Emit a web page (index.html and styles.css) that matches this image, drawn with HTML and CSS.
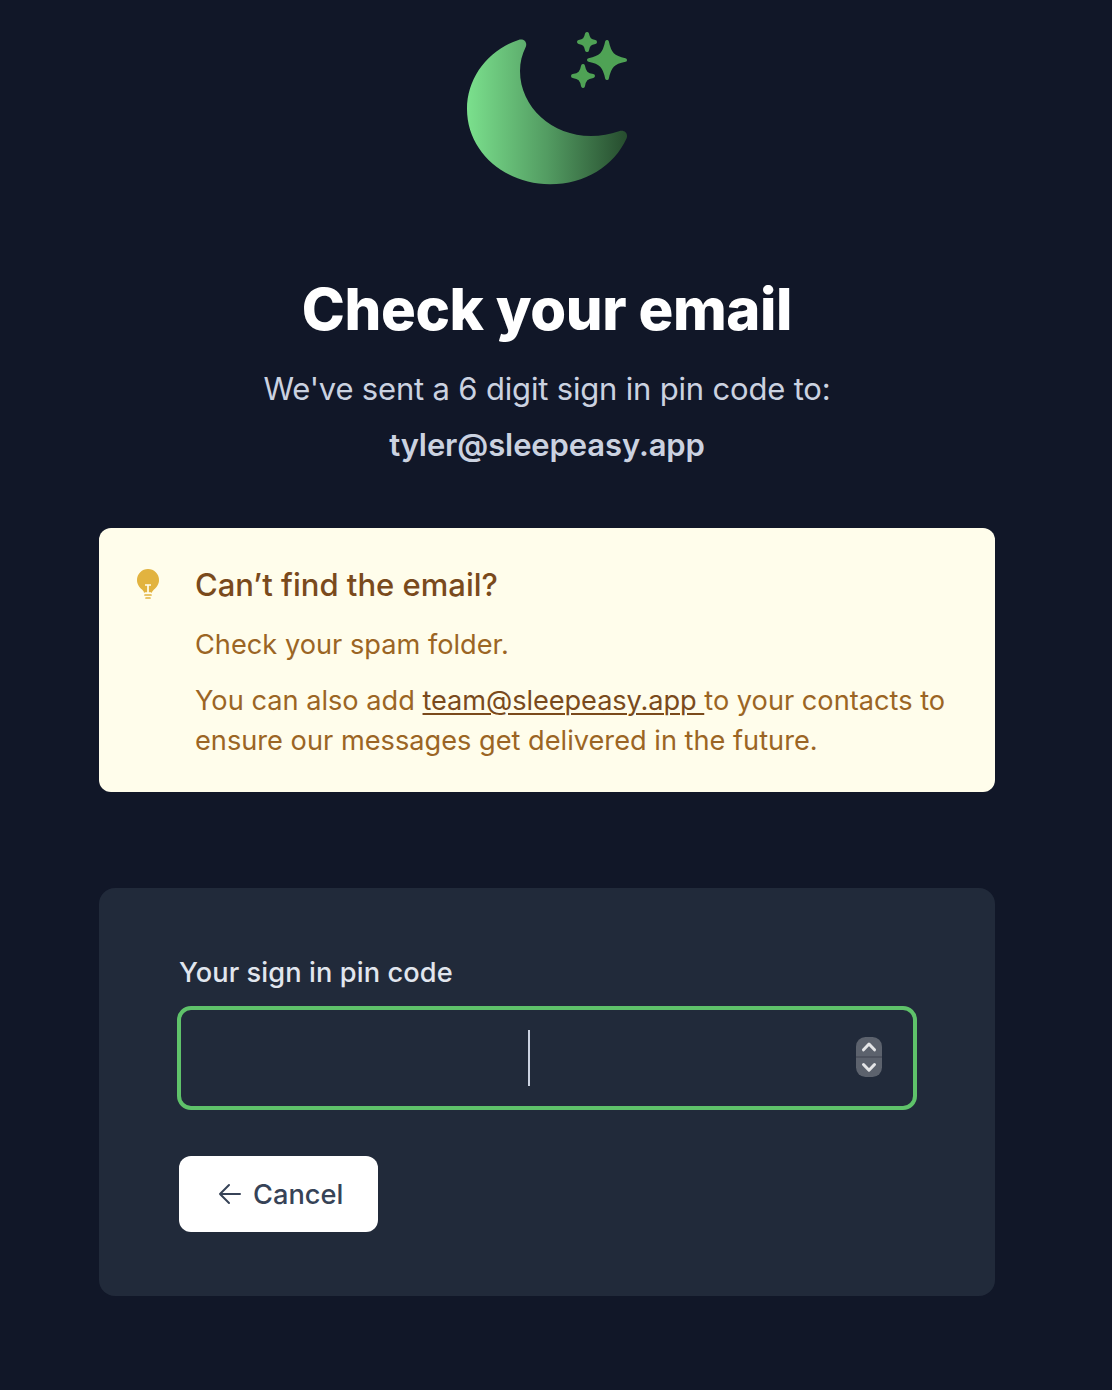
FILE: index.html
```html
<!DOCTYPE html>
<html lang="en">
<head>
<meta charset="utf-8">
<title>Check your email</title>
<link rel="stylesheet" href="styles.css">
</head>
<body>
<main class="page">
  <svg class="logo" viewBox="463 28 168 160" aria-hidden="true">
    <defs>
      <linearGradient id="moon" x1="0" x2="1" y1="0" y2="0">
        <stop offset="0" stop-color="#7be08d"/>
        <stop offset=".5" stop-color="#539c62"/>
        <stop offset="1" stop-color="#264c2e"/>
      </linearGradient>
    </defs>
    <path fill="url(#moon)" d="M518.500 40C488 50 467 78 467 109C467 151 504 184.300 550 184.300C585 184.300 614 166 626.500 138.500C628.500 133.500 624.500 129.500 619 131.300C610 134.500 601 136 591 136C552 136 520 107 520 71C520 62 522 54.500 525.700 47C527.800 42 523.500 38.300 518.500 40Z"/>
    <g fill="#4fa255" stroke="#4fa255" stroke-linejoin="round">
      <path stroke-width="3.8" d="M607 41.900C609.500 54 613 57.500 625.100 60C613 62.500 609.500 66 607 78.100C604.500 66 601 62.500 588.900 60C601 57.500 604.500 54 607 41.900Z"/>
      <path stroke-width="4" d="M587 34C588 39.200 589.800 41 595 42C589.800 43 588 44.800 587 50C586 44.800 584.200 43 579 42C584.200 41 586 39.200 587 34Z"/>
      <path stroke-width="4" d="M583 66C584.200 72.700 586.300 74.800 593 76C586.300 77.200 584.200 79.300 583 86C581.800 79.300 579.700 77.200 573 76C579.700 74.800 581.800 72.700 583 66Z"/>
    </g>
  </svg>

  <header class="intro">
    <h1 class="title">Check your email</h1>
    <p class="lead">We've sent a 6 digit sign in pin code to:</p>
    <p class="lead address">tyler@sleepeasy.app</p>
  </header>

  <section class="notice">
    <svg class="bulb" viewBox="0 0 24 32" aria-hidden="true">
      <path fill="#e2b33f" d="M12 1a11 11 0 0 1 11 11c0 4.600-2.400 7-5 9.600-1.300 1.300-2 2.300-2 3.400H8c0-1.100-.7-2.100-2-3.400C3.400 19 1 16.600 1 12A11 11 0 0 1 12 1Z"/>
      <path stroke="#fffdeb" stroke-width="1.700" d="M9 17h6M12 17v8M8.500 25.200h7"/>
      <path stroke="#e2b33f" stroke-width="1.700" stroke-linecap="round" d="M9 27h6M10 30h4"/>
    </svg>
    <div class="notice-body">
      <h2 class="notice-title">Can’t find the email?</h2>
      <p class="notice-text">Check your spam folder.</p>
      <p class="notice-text">You can also add <a class="notice-link" href="#">team@sleepeasy.app </a>to your contacts to<br>ensure our messages get delivered in the future.</p>
    </div>
  </section>

  <section class="card">
    <div class="label">Your sign in pin code</div>
    <div class="pin">
      <span class="caret"></span>
      <svg class="stepper" viewBox="0 0 26 40" aria-hidden="true">
        <rect width="26" height="40" rx="9.500" fill="#5c626d"/>
        <path stroke="#484e5a" stroke-width="1.500" d="M0 20h26"/>
        <path fill="none" stroke="#e4e5e7" stroke-width="3" stroke-linecap="round" stroke-linejoin="round" d="M7.500 12.800L13 7 18.500 12.800M7.500 27.500L13 33.200 18.500 27.500"/>
      </svg>
    </div>
    <button class="cancel" type="button">
      <svg class="arrow" viewBox="0 0 24 22" aria-hidden="true"><path fill="none" stroke="#374357" stroke-width="2" stroke-linecap="round" stroke-linejoin="round" d="M22 11H2M11 2L2 11l9 9"/></svg>
      <span class="cancel-text">Cancel</span>
    </button>
  </section>
</main>
</body>
</html>
```

FILE: styles.css
```css
* { box-sizing: border-box; }

body {
  margin: 0;
  background: #111728;
  font-family: Inter, "Liberation Sans", sans-serif;
}

h1, h2, p { margin: 0; }

.page {
  display: flex;
  flex-direction: column;
  align-items: center;
  width: 1094px;
  height: 1390px;
  padding-top: 28px;
}

.logo { display: block; width: 168px; height: 160px; }

.intro { height: 255px; margin-top: 85px; text-align: center; white-space: nowrap; }

.title {
  color: #fff;
  font-size: 58px;
  font-weight: 800;
  line-height: 72px;
  letter-spacing: -0.4px;
}

.lead {
  margin-top: 16px;
  color: #cbd2e0;
  font-size: 31px;
  line-height: 56px;
  letter-spacing: -0.18px;
}

.address { margin-top: 0; font-weight: 600; letter-spacing: -0.1px; }

.notice {
  display: flex;
  width: 896px;
  height: 264px;
  padding: 32px 0 0 37px;
  border-radius: 12px;
  background: #fffdeb;
  white-space: nowrap;
}

.bulb { width: 24px; height: 32px; margin: 8px 35px 0 0; }

.notice-title {
  padding-top: 1px;
  color: #7a4a1c;
  font-size: 31px;
  font-weight: 500;
  line-height: 48px;
}

.notice-text {
  margin-top: 16px;
  color: #9b6524;
  font-size: 27.2px;
  line-height: 40px;
}

.notice-link {
  color: #7a4a1c;
  letter-spacing: -0.08px;
  text-decoration: underline;
  text-decoration-thickness: 2px;
  text-underline-offset: 3px;
}

.card {
  width: 896px;
  height: 408px;
  margin-top: 96px;
  padding: 65px 78px 64px;
  border-radius: 16px;
  background: #212a3a;
}

.label {
  padding-left: 2px;
  color: #e1e6ee;
  font-size: 27.2px;
  font-weight: 500;
  line-height: 40px;
  letter-spacing: 0.1px;
}

.pin {
  display: flex;
  align-items: center;
  justify-content: space-between;
  width: 740px;
  height: 104px;
  margin-top: 13px;
  padding: 0 31px 3px 347px;
  border: 4px solid #5fc26a;
  border-radius: 14px;
}

.caret { width: 2px; height: 56px; margin-top: 3px; background: #cbd2e0; }

.stepper { width: 26px; height: 40px; }

.cancel {
  display: flex;
  align-items: center;
  width: 199px;
  height: 76px;
  margin: 46px 0 0 2px;
  padding: 0 0 0 39px;
  border: 0;
  border-radius: 12px;
  background: #fff;
  color: #374357;
  font: 500 27.2px/40px Inter, "Liberation Sans", sans-serif;
}

.cancel-text { padding-top: 2px; }

.arrow { width: 24px; height: 22px; margin-right: 11px; }
```
